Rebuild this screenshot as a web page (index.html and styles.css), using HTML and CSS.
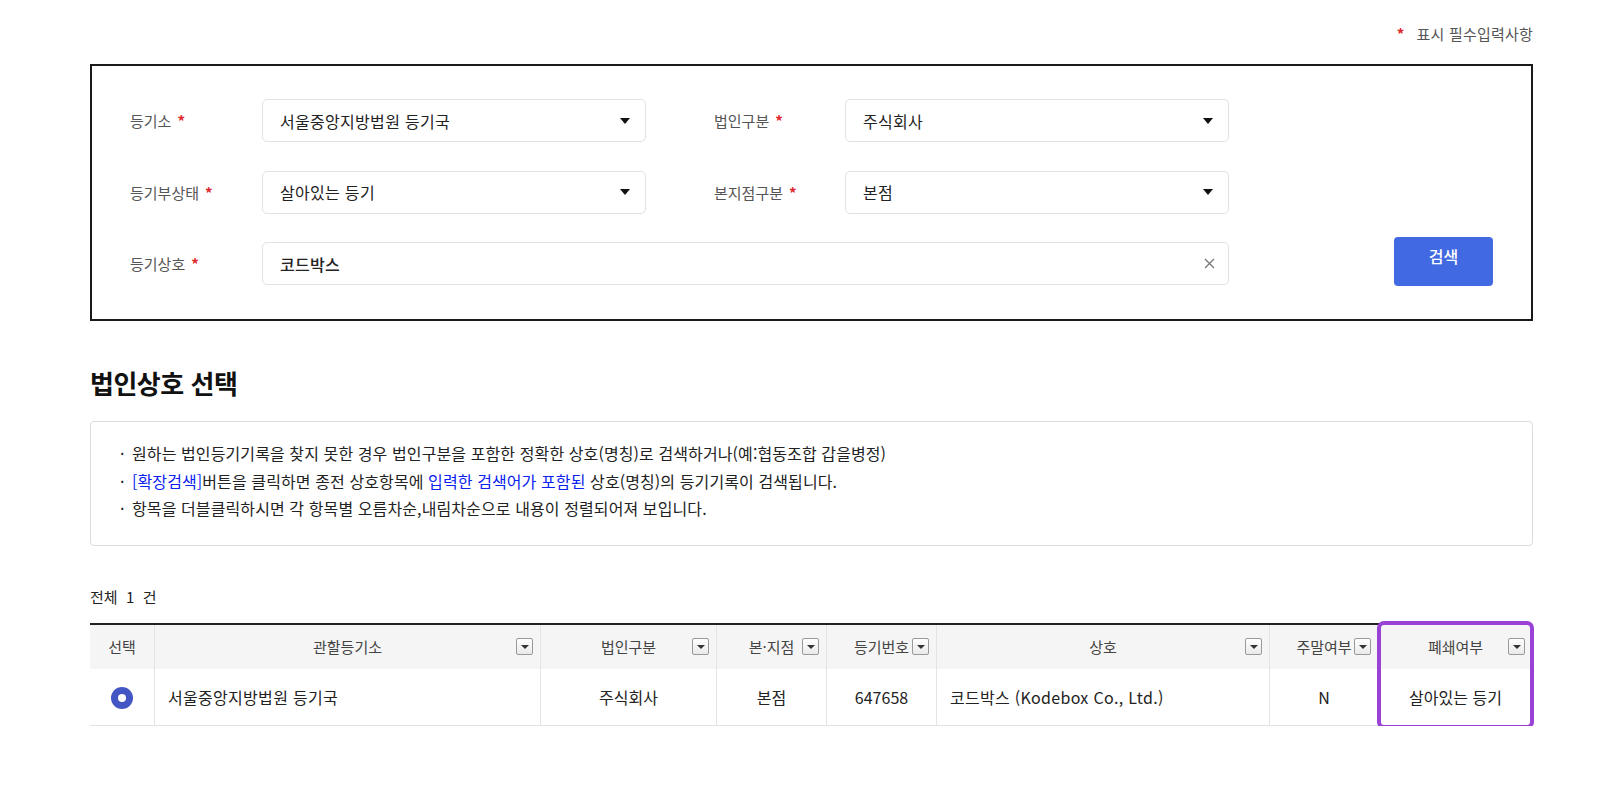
FILE: index.html
```html
<!DOCTYPE html>
<html lang="ko">
	<head>
		<meta charset="UTF-8">
		<title>법인상호 선택</title>
		<link rel="stylesheet" href="styles.css">
	</head>
	<body>
		<div class="page">
			<p class="req-note"><span class="star">*</span>표시 필수입력사항</p>

			<!-- 검색 조건 -->
			<div class="search-box">
				<label class="lbl">등기소 <span class="star">*</span></label>
				<div class="field select">
					<span>서울중앙지방법원 등기국</span>
					<svg class="caret" width="10" height="6" viewBox="0 0 10 6"><path d="M0 0h10L5 6z" fill="#111"/></svg>
				</div>
				<div class="spacer"></div>
				<label class="lbl">법인구분 <span class="star">*</span></label>
				<div class="field select">
					<span>주식회사</span>
					<svg class="caret" width="10" height="6" viewBox="0 0 10 6"><path d="M0 0h10L5 6z" fill="#111"/></svg>
				</div>
				<div></div>

				<label class="lbl">등기부상태 <span class="star">*</span></label>
				<div class="field select">
					<span>살아있는 등기</span>
					<svg class="caret" width="10" height="6" viewBox="0 0 10 6"><path d="M0 0h10L5 6z" fill="#111"/></svg>
				</div>
				<div class="spacer"></div>
				<label class="lbl">본지점구분 <span class="star">*</span></label>
				<div class="field select">
					<span>본점</span>
					<svg class="caret" width="10" height="6" viewBox="0 0 10 6"><path d="M0 0h10L5 6z" fill="#111"/></svg>
				</div>
				<div></div>

				<label class="lbl">등기상호 <span class="star">*</span></label>
				<div class="field input">
					<span>코드박스</span>
					<svg class="clear" width="11" height="11" viewBox="0 0 11 11"><path d="M1 1l9 9M10 1l-9 9" stroke="#777" stroke-width="1.3" fill="none"/></svg>
				</div>
				<button class="btn-search">검색</button>
			</div>

			<h2 class="title">법인상호 선택</h2>

			<ul class="info">
				<li>원하는 법인등기기록을 찾지 못한 경우 법인구분을 포함한 정확한 상호(명칭)로 검색하거나(예:협동조합 갑을병정)</li>
				<li><span class="blue">[확장검색]</span>버튼을 클릭하면 종전 상호항목에 <span class="blue">입력한 검색어가 포함된</span> 상호(명칭)의 등기기록이 검색됩니다.</li>
				<li>항목을 더블클릭하시면 각 항목별 오름차순,내림차순으로 내용이 정렬되어져 보입니다.</li>
			</ul>

			<p class="total">전체&nbsp; 1&nbsp; 건</p>

			<div class="grid-wrap">
				<table class="grid">
					<colgroup>
						<col style="width:64px">
						<col style="width:386px">
						<col style="width:176px">
						<col style="width:110px">
						<col style="width:110px">
						<col style="width:333px">
						<col style="width:109px">
						<col style="width:154px">
					</colgroup>
					<thead>
						<tr>
							<th>선택</th>
							<th>관할등기소<i class="flt"></i></th>
							<th>법인구분<i class="flt"></i></th>
							<th>본·지점<i class="flt"></i></th>
							<th>등기번호<i class="flt"></i></th>
							<th>상호<i class="flt"></i></th>
							<th>주말여부<i class="flt"></i></th>
							<th>폐쇄여부<i class="flt"></i></th>
						</tr>
					</thead>
					<tbody>
						<tr>
							<td><span class="radio"></span></td>
							<td class="left">서울중앙지방법원 등기국</td>
							<td>주식회사</td>
							<td>본점</td>
							<td>647658</td>
							<td class="left">코드박스 (Kodebox Co., Ltd.)</td>
							<td>N</td>
							<td>살아있는 등기</td>
						</tr>
					</tbody>
				</table>
				<div class="mark"></div>
			</div>
		</div>
	</body>
</html>
```

FILE: styles.css
```css
* {
	margin: 0;
	padding: 0;
	box-sizing: border-box;
}

ul, li {
	list-style: none;
}

body {
	background: #fff;
	color: #222;
	font-family: "Noto Sans CJK KR", "Noto Sans", sans-serif;
}

.page {
	width: 1443px;
	margin-left: 90px;
	padding-top: 24px;
}

.star {
	color: #e0262b;
	font-weight: 700;
}

.req-note {
	text-align: right;
	font-size: 15px;
	line-height: 20px;
	color: #555;
	letter-spacing: 0.2px;
}

.req-note .star {
	margin-right: 12px;
}

/* 검색 영역 */
.search-box {
	margin-top: 20px;
	border: 2px solid #1a1a1a;
	padding: 33px 38px 34px 38px;
	display: grid;
	grid-template-columns: 132px 384px 68px 131px 384px 1fr;
	grid-template-rows: 43px 43px 43px;
	row-gap: 28.5px;
}

.lbl {
	display: flex;
	align-items: center;
	font-size: 15px;
	color: #555;
}

.lbl .star {
	margin-left: 6px;
}

.field {
	display: flex;
	align-items: center;
	justify-content: space-between;
	border: 1px solid #e2e2e2;
	border-radius: 5px;
	padding: 0 15px 0 17px;
	font-size: 16px;
	color: #222;
	letter-spacing: 0.3px;
	background: #fff;
}

.input {
	grid-column: 2 / 6;
	padding-right: 13px;
	font-weight: 500;
}

.btn-search {
	justify-self: end;
	align-self: end;
	width: 99px;
	height: 49px;
	margin-bottom: -1px;
	padding-top: 2px;
	border: none;
	border-radius: 4px;
	background: #4169e2;
	color: #fff;
	font-family: inherit;
	font-size: 16px;
	font-weight: 500;
	line-height: 34px;
	display: flex;
	justify-content: center;
	align-items: flex-start;
}

/* 법인상호 선택 */
.title {
	margin-top: 44px;
	font-size: 26px;
	line-height: 36px;
	font-weight: 700;
	letter-spacing: -0.5px;
	color: #111;
}

.info {
	margin-top: 20px;
	border: 1px solid #dcdcdc;
	border-radius: 4px;
	padding: 18px 20px 22px 29px;
}

.info li {
	font-size: 16px;
	line-height: 27.5px;
	letter-spacing: 0.1px;
	color: #222;
	position: relative;
	padding-left: 12px;
}

.info li::before {
	content: "·";
	position: absolute;
	left: 0;
	top: 0;
}

.blue {
	color: #0a22f0;
}

.total {
	margin-top: 41px;
	font-size: 15px;
	line-height: 20px;
	color: #222;
}

/* 그리드 */
.grid-wrap {
	position: relative;
	margin-top: 16px;
	width: 1442px;
}

.grid {
	width: 1442px;
	table-layout: fixed;
	border-collapse: separate;
	border-spacing: 0;
	border-top: 2px solid #222;
}

.grid th {
	position: relative;
	height: 44px;
	background: #f5f5f5;
	font-size: 15px;
	font-weight: 400;
	color: #444;
	border-left: 1px solid #e4e4e4;
	text-align: center;
}

.grid td {
	height: 57px;
	font-size: 16px;
	color: #222;
	border-left: 1px solid #e4e4e4;
	border-bottom: 1px solid #e2e2e2;
	text-align: center;
}

.grid td.left {
	text-align: left;
	padding-left: 13px;
	letter-spacing: 0.3px;
}

.grid th:first-child,
.grid td:first-child {
	border-left: none;
}

.flt {
	position: absolute;
	right: 7px;
	top: 13px;
	width: 17px;
	height: 17px;
	border: 1px solid #9a9a9a;
	border-radius: 2px;
	background: linear-gradient(#fff, #e9e9e9);
}

.flt::after {
	content: "";
	position: absolute;
	left: 4px;
	top: 6px;
	border-left: 4px solid transparent;
	border-right: 4px solid transparent;
	border-top: 4px solid #333;
}

.radio {
	display: inline-block;
	width: 22px;
	height: 22px;
	border-radius: 50%;
	background: #4356c4;
	position: relative;
	vertical-align: middle;
}

.radio::after {
	content: "";
	position: absolute;
	left: 7px;
	top: 7px;
	width: 8px;
	height: 8px;
	border-radius: 50%;
	background: #fff;
}

.mark {
	position: absolute;
	left: 1287px;
	top: -2px;
	width: 157px;
	height: 108px;
	border: 4px solid #9b42d6;
	border-radius: 7px;
	pointer-events: none;
}
```
